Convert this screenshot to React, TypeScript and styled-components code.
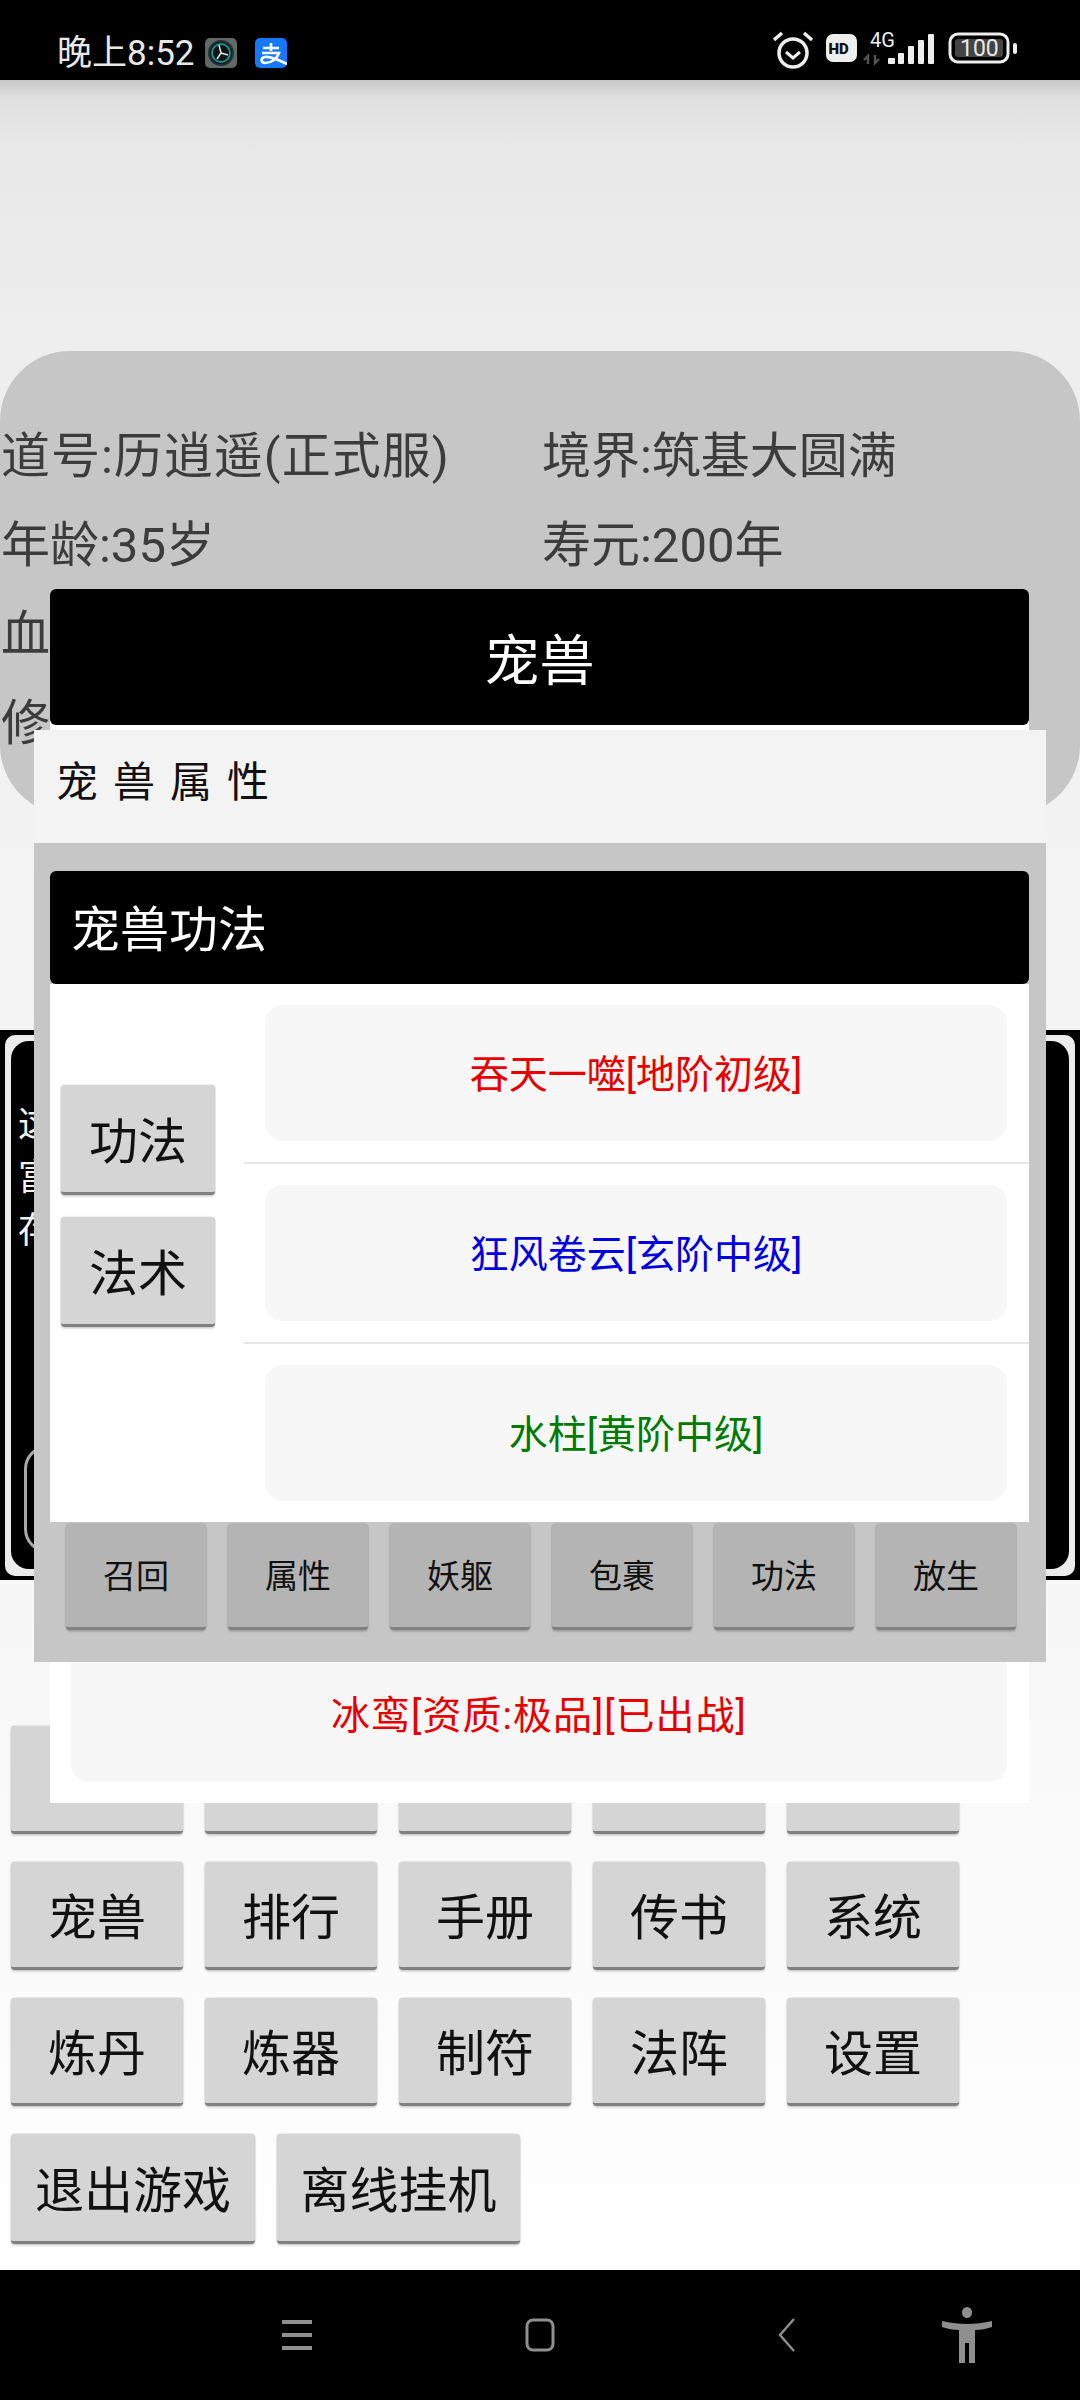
import React from "react";
import styled, { createGlobalStyle } from "styled-components";

const Global = createGlobalStyle`
  html, body { margin: 0; padding: 0; background: #fff; }
  body { font-family: Roboto, "Noto Sans CJK SC", sans-serif; }
  * { box-sizing: border-box; }
`;

const Page = styled.div`
  position: relative;
  width: 1080px;
  height: 2400px;
  overflow: hidden;
  display: flex;
  flex-direction: column;
  background: linear-gradient(180deg, #c8c8c8 80px, #e0e0e0 98px, #e8e8e8 150px, #eeeeee 340px, #f2f2f2 800px, #f7f7f7 1600px, #fdfdfd 2150px, #fff 2270px);
`;

/* status bar */
const StatusBar = styled.div`
  height: 80px;
  flex: none;
  background: #000;
  display: flex;
  align-items: center;
  padding: 0 0 0 57px;
  color: #e8e8e8;
`;
const Time = styled.span`
  font-size: 35px;
  line-height: 1;
  width: 148px;
  margin-top: 26px;
`;
const StatusLeft = styled.div`
  display: flex;
  align-items: center;
  gap: 18px;
  margin-top: 26px;
  height: 30px;
`;
const StatusRight = styled.svg`
  margin-left: auto;
  margin-top: 22px;
  flex: none;
`;
const BatteryText = styled.text`
  font-family: Roboto, sans-serif;
  font-size: 23px;
  fill: #e8e8e8;
`;
const SmallText = styled.text`
  font-family: Roboto, sans-serif;
  font-size: 20px;
  fill: #eee;
`;
const HdText = styled.text`
  font-family: Roboto, sans-serif;
  font-size: 15px;
  font-weight: 900;
  fill: #111;
`;

/* profile card */
const ProfileCard = styled.div`
  flex: none;
  margin-top: 271px;
  height: 464px;
  background: #c6c6c6;
  border-radius: 70px;
  padding: 56px 0 0 1px;
  display: grid;
  grid-template-columns: 541px 1fr;
  grid-auto-rows: 89px;
  align-items: center;
  color: #3c3c3c;
  font-size: 49px;
`;
const WideParens = styled.span`
  letter-spacing: 1px;
`;

/* log box */
const LogOuter = styled.div`
  flex: none;
  margin-top: 215px;
  height: 550px;
  background: #000;
  padding: 5px;
`;
const LogFrame = styled.div`
  height: 541px;
  background: #ececec;
  border-radius: 10px;
  padding: 6px;
`;
const LogInner = styled.div`
  height: 528px;
  background: #000;
  border-radius: 18px;
  padding: 58px 0 0 7px;
  color: #f2f2f2;
  font-size: 36px;
  line-height: 53px;
`;
const LogOutlineButton = styled.div`
  margin: 187px 0 0 6px;
  width: 200px;
  height: 108px;
  border: 3px solid #a8a8a8;
  border-radius: 24px;
`;

/* main button grid */
const MenuGrid = styled.div`
  flex: none;
  margin-top: 146px;
  padding-left: 11px;
  display: flex;
  flex-direction: column;
  gap: 28px;
`;
const MenuRow = styled.div`
  display: flex;
  gap: 22px;
`;
const GameButton = styled.button<{ $w: number; $h: number; $size: number; $tone?: string; $drop?: number }>`
  flex: none;
  width: ${(p) => p.$w}px;
  height: ${(p) => p.$h}px;
  padding: ${(p) => p.$drop ?? 7}px 0 0;
  border: none;
  border-radius: 4px;
  background: ${(p) => p.$tone ?? "#d5d5d5"};
  border-bottom: 3px solid #808080;
  box-shadow: 0 0 2px rgba(0, 0, 0, 0.25), 0 2px 2px rgba(0, 0, 0, 0.12);
  color: #111;
  font-family: inherit;
  font-size: ${(p) => p.$size}px;
  line-height: 1;
`;

/* nav */
const NavBar = styled.div`
  margin-top: auto;
  height: 130px;
  flex: none;
  background: #000;
  display: flex;
  align-items: center;
  padding-left: 282px;
`;
const NavIcon = styled.svg<{ $gap: number }>`
  flex: none;
  margin-right: ${(p) => p.$gap}px;
`;

/* pet dialog (behind) */
const PetDialog = styled.div`
  position: absolute;
  left: 50px;
  top: 589px;
  width: 979px;
  height: 1214px;
  background: #fff;
  border-radius: 6px 6px 0 0;
  display: flex;
  flex-direction: column;
`;
const PetHeader = styled.div`
  height: 136px;
  flex: none;
  background: #000;
  border-radius: 6px;
  color: #fff;
  font-size: 55px;
  padding-bottom: 2px;
  display: flex;
  align-items: center;
  justify-content: center;
`;
const PetItem = styled.div`
  margin: auto 22px 21px 21px;
  height: 136px;
  background: #f7f7f7;
  border-radius: 18px;
  color: #e80000;
  font-size: 39px;
  letter-spacing: 1px;
  padding-bottom: 4px;
  display: flex;
  align-items: center;
  justify-content: center;
`;

/* skill dialog (front) */
const SkillDialog = styled.div`
  position: absolute;
  left: 34px;
  top: 730px;
  width: 1012px;
  height: 932px;
  background: #c6c6c6;
  display: flex;
  flex-direction: column;
`;
const AttrTitle = styled.div`
  height: 113px;
  flex: none;
  background: #f3f3f3;
  padding: 0 0 16px 22px;
  display: flex;
  align-items: center;
  color: #111;
  font-size: 42px;
  letter-spacing: 15px;
`;
const SkillHeader = styled.div`
  margin: 28px 17px 0 16px;
  height: 113px;
  flex: none;
  background: #000;
  border-radius: 6px;
  color: #fff;
  font-size: 49px;
  display: flex;
  align-items: center;
  padding: 0 0 5px 21px;
`;
const SkillBody = styled.div`
  margin: 0 17px 0 16px;
  height: 538px;
  flex: none;
  background: #fff;
  display: grid;
  grid-template-columns: 194px 1fr;
`;
const SkillTabs = styled.div`
  padding: 101px 0 0 11px;
  display: flex;
  flex-direction: column;
  gap: 22px;
`;
const SkillList = styled.div`
  display: flex;
  flex-direction: column;
`;
const SkillRow = styled.div<{ $last?: boolean }>`
  height: 180px;
  flex: none;
  padding: 21px 22px 0 21px;
  border-bottom: ${(p) => (p.$last ? "none" : "2px solid #e6e6e6")};
`;
const SkillItem = styled.div<{ $color: string }>`
  height: 136px;
  background: #f7f7f7;
  border-radius: 18px;
  color: ${(p) => p.$color};
  font-size: 39px;
  padding-bottom: 4px;
  display: flex;
  align-items: center;
  justify-content: center;
`;
const ActionRow = styled.div`
  padding: 2px 0 0 32px;
  display: flex;
  gap: 22px;
`;

const menuRows = [
  ["", "", "", "", ""],
  ["宠兽", "排行", "手册", "传书", "系统"],
  ["炼丹", "炼器", "制符", "法阵", "设置"],
];
const skills = [
  { name: "吞天一噬[地阶初级]", color: "#e80000" },
  { name: "狂风卷云[玄阶中级]", color: "#0000e0" },
  { name: "水柱[黄阶中级]", color: "#007a00" },
];
const actions = ["召回", "属性", "妖躯", "包裹", "功法", "放生"];

export default function App() {
  return (
    <Page>
      <Global />
      <StatusBar>
        <Time>晚上8:52</Time>
        <StatusLeft>
          <svg width="32" height="30" viewBox="0 0 32 30">
            <rect width="32" height="30" rx="5" fill="#5f6a66" />
            <circle cx="16" cy="15" r="12" fill="#0d1416" stroke="#26323a" strokeWidth="2" />
            <circle cx="16" cy="15" r="9" fill="none" stroke="#1f8f8a" strokeWidth="2" />
            <path d="M16 15 L14 7 M16 15 L23 17 M16 15 L12 21" stroke="#dfe6e4" strokeWidth="1.5" />
          </svg>
          <svg width="32" height="30" viewBox="0 0 32 30">
            <rect width="32" height="30" rx="5" fill="#1677ff" />
            <path d="M8 10 H24 M16 5 V13 M7 15 H24 C22 21 16 25 10 25 C6 25 5 20 10 19 C15 18 22 21 32 26" fill="none" stroke="#fff" strokeWidth="2.6" />
          </svg>
        </StatusLeft>
        <StatusRight width="307" height="46" viewBox="0 0 307 46">
          {/* alarm */}
          <g fill="none" stroke="#eee">
            <circle cx="20" cy="25" r="14" strokeWidth="3.5" />
            <path d="M13 24 L20 30 L27 24" strokeWidth="3" />
            <path d="M1 12 L9 5 M39 12 L31 5" strokeWidth="3.5" />
          </g>
          {/* HD */}
          <rect x="53" y="6" width="31" height="28" rx="7" fill="#eee" />
          <HdText x="55.5" y="26">HD</HdText>
          {/* 4G + data arrows */}
          <SmallText x="97" y="19">4G</SmallText>
          <path d="M95 36 V28 L91 32 M102 27 V35 L106 31" fill="none" stroke="#555" strokeWidth="2.4" />
          {/* signal */}
          <g fill="#eee">
            <rect x="115" y="30" width="7" height="6" rx="1" />
            <rect x="125" y="25" width="6" height="11" rx="1" />
            <rect x="135" y="18" width="6" height="18" rx="1" />
            <rect x="145" y="12" width="6" height="24" rx="1" />
            <rect x="155" y="6" width="6" height="30" rx="1" />
          </g>
          {/* battery */}
          <rect x="177" y="6" width="58" height="28" rx="8" fill="none" stroke="#eee" strokeWidth="3" />
          <rect x="182" y="11" width="48" height="18" rx="3" fill="#444" />
          <BatteryText x="187" y="28">100</BatteryText>
          <rect x="240" y="15" width="4" height="11" rx="2" fill="#eee" />
        </StatusRight>
      </StatusBar>

      <ProfileCard>
        <WideParens>道号:历逍遥(正式服)</WideParens>
        <span>境界:筑基大圆满</span>
        <span>年龄:35岁</span>
        <span>寿元:200年</span>
        <span>血</span>
        <span />
        <span>修</span>
        <span />
      </ProfileCard>

      <LogOuter>
        <LogFrame>
          <LogInner>
            <div>这</div>
            <div>富</div>
            <div>存</div>
            <LogOutlineButton />
          </LogInner>
        </LogFrame>
      </LogOuter>

      <MenuGrid>
        {menuRows.map((row, i) => (
          <MenuRow key={i}>
            {row.map((label, j) => (
              <GameButton key={j} $w={172} $h={108} $size={49}>
                {label}
              </GameButton>
            ))}
          </MenuRow>
        ))}
        <MenuRow>
          <GameButton $w={244} $h={110} $size={49}>退出游戏</GameButton>
          <GameButton $w={243} $h={110} $size={49}>离线挂机</GameButton>
        </MenuRow>
      </MenuGrid>

      <NavBar>
        <NavIcon $gap={213} width="30" height="32" viewBox="0 0 30 32">
          <path d="M0 3 H30 M0 16 H30 M0 29 H30" stroke="#8f8f8f" strokeWidth="4" strokeLinecap="round" />
        </NavIcon>
        <NavIcon $gap={223} width="30" height="34" viewBox="0 0 30 34">
          <rect x="2" y="2" width="26" height="30" rx="6" fill="none" stroke="#8f8f8f" strokeWidth="3" />
        </NavIcon>
        <NavIcon $gap={147} width="17" height="34" viewBox="0 0 17 34">
          <path d="M16 1 L2 17 L16 33" fill="none" stroke="#8f8f8f" strokeWidth="2.4" />
        </NavIcon>
        <NavIcon $gap={0} width="50" height="56" viewBox="0 0 50 56">
          <ellipse cx="25" cy="5.5" rx="5" ry="5.5" fill="#8f8f8f" />
          <path d="M0 14 C8 16 17 17 25 17 C33 17 42 16 50 14 V20 C44 22 39 23 33 23 V56 H27 V36 H23 V56 H17 V23 C11 23 6 22 0 20 Z" fill="#8f8f8f" />
        </NavIcon>
      </NavBar>

      <PetDialog>
        <PetHeader>宠兽</PetHeader>
        <PetItem>冰鸾[资质:极品][已出战]</PetItem>
      </PetDialog>

      <SkillDialog>
        <AttrTitle>宠兽属性</AttrTitle>
        <SkillHeader>宠兽功法</SkillHeader>
        <SkillBody>
          <SkillTabs>
            <GameButton $w={154} $h={110} $size={49}>功法</GameButton>
            <GameButton $w={154} $h={110} $size={49}>法术</GameButton>
          </SkillTabs>
          <SkillList>
            {skills.map((s, i) => (
              <SkillRow key={s.name} $last={i === skills.length - 1}>
                <SkillItem $color={s.color}>{s.name}</SkillItem>
              </SkillRow>
            ))}
          </SkillList>
        </SkillBody>
        <ActionRow>
          {actions.map((a) => (
            <GameButton key={a} $w={140} $h={106} $size={33} $drop={2} $tone="#b4b4b4">
              {a}
            </GameButton>
          ))}
        </ActionRow>
      </SkillDialog>
    </Page>
  );
}
